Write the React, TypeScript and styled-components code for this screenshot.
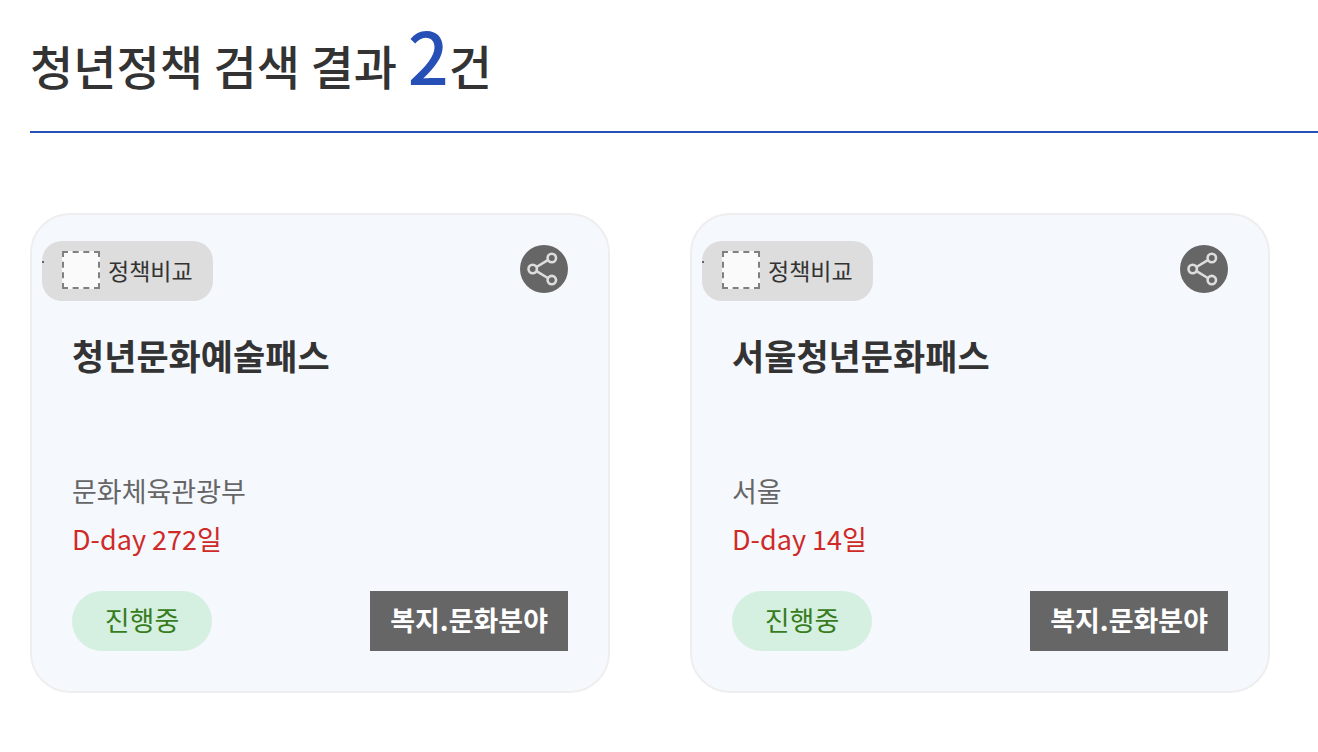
import React from "react";
import styled, { createGlobalStyle } from "styled-components";

const GlobalStyle = createGlobalStyle`
  *, *::before, *::after { box-sizing: border-box; }
  body {
    margin: 0;
    background: #fff;
    color: #333;
    font-family: "Noto Sans CJK KR", "Noto Sans", sans-serif;
    font-weight: 400;
  }
`;

const Page = styled.main`
  padding: 18px 0 60px 30px;
`;

const Heading = styled.h1`
  margin: 0;
  height: 115px;
  border-bottom: 2px solid #2650b5;
  font-size: 47px;
  font-weight: 500;
  line-height: 72px;
`;

const Count = styled.strong`
  color: #2650b5;
  font-size: 72px;
  font-weight: 500;
`;

const CardList = styled.ul`
  display: grid;
  grid-template-columns: repeat(2, minmax(0, 1fr));
  gap: 80px;
  margin: 80px 48px 0 0;
  padding: 0;
  list-style: none;
`;

const Card = styled.li`
  display: flex;
  flex-direction: column;
  min-height: 480px;
  padding: 26px 40px 40px;
  border: 2px solid #eee;
  border-radius: 40px;
  background: #f5f8fd;
`;

const CardTop = styled.div`
  display: flex;
  align-items: flex-start;
  justify-content: space-between;
  margin-left: -30px;
`;

const CompareLabel = styled.label`
  position: relative;
  display: flex;
  align-items: center;
  gap: 8px;
  height: 60px;
  padding: 0 20px 2px;
  border-radius: 20px;
  background: #ddd;
  font-size: 23px;
  line-height: 30px;
  cursor: pointer;

  &::before {
    content: "";
    position: absolute;
    left: 0;
    top: 20px;
    width: 2px;
    height: 2px;
    background: #666;
  }
`;

const CompareBox = styled.input`
  appearance: none;
  width: 38px;
  height: 38px;
  margin: 0;
  border: 2px dashed #808080;
  background: #fafafa;
  cursor: pointer;

  &:checked { background: #2650b5; }
`;

const ShareButton = styled.button`
  width: 48px;
  height: 48px;
  margin-top: 4px;
  padding: 0;
  border: 0;
  border-radius: 50%;
  background: #666;
  cursor: pointer;

  svg { display: block; }
`;

const Title = styled.h2`
  margin: 28px 0 0;
  font-size: 35px;
  font-weight: 700;
  line-height: 52px;
`;

const Details = styled.div`
  margin-top: auto;
  font-size: 27px;
  line-height: 48px;
`;

const Organization = styled.p`
  margin: 0;
  color: #666;
`;

const Deadline = styled.p`
  margin: 0;
  color: #cf2a27;
`;

const CardBottom = styled.div`
  display: flex;
  align-items: center;
  justify-content: space-between;
  margin-top: 28px;
  font-size: 27px;
  line-height: 58px;
`;

const Status = styled.span`
  min-width: 140px;
  padding-bottom: 2px;
  border-radius: 30px;
  background: #d5f0e0;
  color: #387c1d;
  text-align: center;
`;

const Category = styled.span`
  padding: 0 20px 2px;
  background: #666;
  color: #fff;
  font-weight: 700;
`;

const ShareIcon = () => (
  <svg width="48" height="48" viewBox="0 0 48 48" fill="none" stroke="#ddd" strokeWidth="2.6" aria-hidden="true">
    <path d="M16.5 22 27.8 15.2M16.5 26.2 27.8 33" />
    <circle cx="12.7" cy="24" r="4.2" />
    <circle cx="31.8" cy="13" r="4.2" />
    <circle cx="31.8" cy="35.1" r="4.2" />
  </svg>
);

const policies = [
  { title: "청년문화예술패스", organization: "문화체육관광부", deadline: "D-day 272일" },
  { title: "서울청년문화패스", organization: "서울", deadline: "D-day 14일" },
];

export default function App() {
  return (
    <>
      <GlobalStyle />
      <Page>
        <Heading>
          청년정책 검색 결과 <Count>{policies.length}</Count>건
        </Heading>
        <CardList>
          {policies.map((policy) => (
            <Card key={policy.title}>
              <CardTop>
                <CompareLabel>
                  <CompareBox type="checkbox" />
                  정책비교
                </CompareLabel>
                <ShareButton type="button" aria-label="공유">
                  <ShareIcon />
                </ShareButton>
              </CardTop>
              <Title>{policy.title}</Title>
              <Details>
                <Organization>{policy.organization}</Organization>
                <Deadline>{policy.deadline}</Deadline>
              </Details>
              <CardBottom>
                <Status>진행중</Status>
                <Category>복지.문화분야</Category>
              </CardBottom>
            </Card>
          ))}
        </CardList>
      </Page>
    </>
  );
}
